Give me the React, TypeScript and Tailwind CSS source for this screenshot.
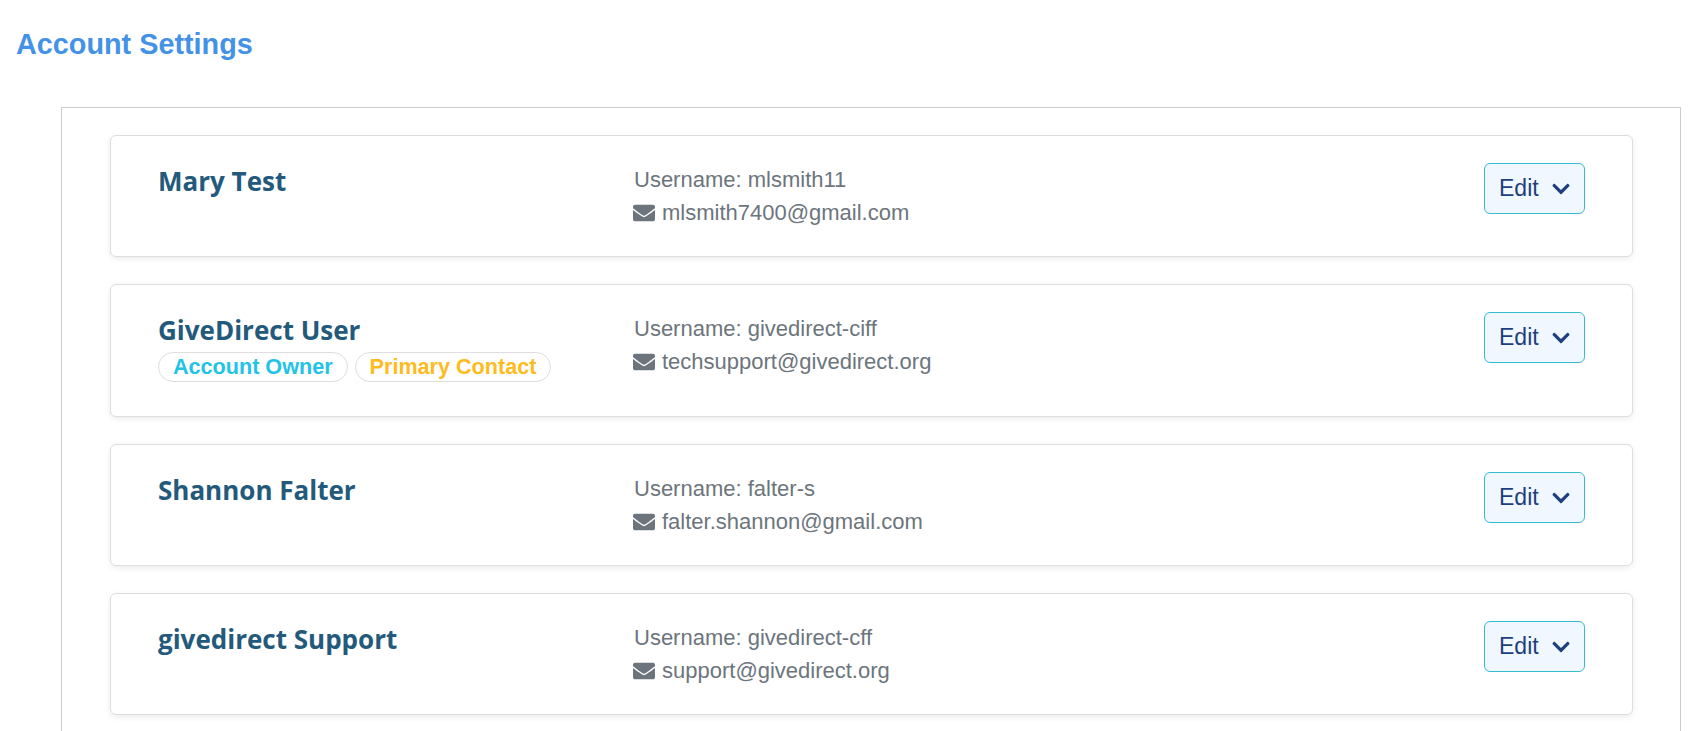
import { FaChevronDown, FaEnvelope } from "react-icons/fa"

type User = {
  name: string
  username: string
  email: string
  badges?: boolean
}

const users: User[] = [
  { name: "Mary Test", username: "mlsmith11", email: "mlsmith7400@gmail.com" },
  { name: "GiveDirect User", username: "givedirect-ciff", email: "techsupport@givedirect.org", badges: true },
  { name: "Shannon Falter", username: "falter-s", email: "falter.shannon@gmail.com" },
  { name: "givedirect Support", username: "givedirect-cff", email: "support@givedirect.org" },
]

function UserCard({ user }: { user: User }) {
  return (
    <div className="flex min-h-[122px] rounded-md border border-[#dedede] bg-white pl-[47px] pr-[47px] pt-[27px] pb-[22px] shadow-[0_2px_6px_rgba(0,0,0,0.08)]">
      <div className="w-[476px] shrink-0">
        <div className="font-['Open_Sans',sans-serif] text-[26px] leading-[36px] font-bold text-[#235a7c]">{user.name}</div>
        {user.badges && (
          <div className="mt-[4px] mb-[12px] flex gap-[7px] text-[21.6px] leading-[28px] font-bold">
            <span className="rounded-full border border-[#dedede] px-[14px] text-[#22c3e6]">Account Owner</span>
            <span className="rounded-full border border-[#dedede] px-[14px] text-[#fdbb1e]">Primary Contact</span>
          </div>
        )}
      </div>
      <div className="flex-1 text-[22px] leading-[33px] text-[#6c757d]">
        <div>Username: {user.username}</div>
        <div className="flex items-center gap-[7px]">
          <FaEnvelope className="-ml-[1px] h-[22px] w-[22px]" />
          <span>{user.email}</span>
        </div>
      </div>
      <div>
        <button className="flex h-[51px] w-[101px] items-center gap-[12px] rounded-md border border-[#34bcd2] bg-[#f0f7ff] pl-[14px] text-[23px] text-[#1e3f7e]">
          Edit
          <FaChevronDown className="h-[20px] w-[20px]" />
        </button>
      </div>
    </div>
  )
}

export default function App() {
  return (
    <div className="h-[731px] overflow-hidden bg-white font-['Liberation_Sans',Arial,sans-serif]">
      <h1 className="pl-[16px] pt-[25px] text-[28.8px] leading-[38px] font-bold text-[#4491e8]">Account Settings</h1>
      <div className="ml-[61px] mr-[21px] mt-[44px] flex flex-col gap-[27px] border border-[#cccccc] pl-[48px] pr-[47px] pt-[27px] pb-[40px]">
        {users.map((u) => (
          <UserCard key={u.name} user={u} />
        ))}
      </div>
    </div>
  )
}
